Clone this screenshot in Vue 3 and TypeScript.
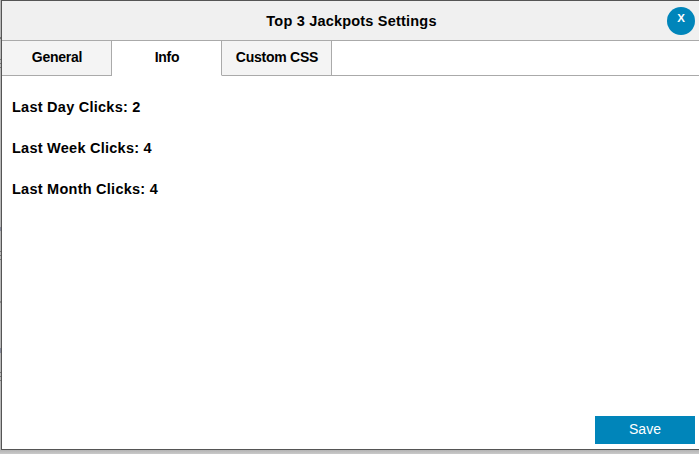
<script setup lang="ts">
import { ref } from 'vue'

const tabs: string[] = ['General', 'Info', 'Custom CSS']
const active = ref('Info')
const stats: { label: string; value: number }[] = [
  { label: 'Last Day Clicks', value: 2 },
  { label: 'Last Week Clicks', value: 4 },
  { label: 'Last Month Clicks', value: 4 },
]
</script>

<template>
  <div class="backdrop">
    <section class="dialog">
      <header class="title-bar">
        <h1>Top 3 Jackpots Settings</h1>
        <button class="close" type="button">X</button>
      </header>
      <nav class="tabs">
        <button
          v-for="tab in tabs"
          :key="tab"
          type="button"
          class="tab"
          :class="{ active: tab === active }"
          @click="active = tab"
        >{{ tab }}</button>
        <div class="rest"></div>
      </nav>
      <main class="content">
        <p v-for="s in stats" :key="s.label">{{ s.label }}: {{ s.value }}</p>
      </main>
      <footer class="actions">
        <button class="save" type="button">Save</button>
      </footer>
    </section>
  </div>
</template>

<style>
body {
  margin: 0;
  overflow: hidden;
}
</style>

<style scoped>
.backdrop {
  box-sizing: border-box;
  width: 699px;
  height: 454px;
  padding: 0 0 4px 1px;
  /* Dimmed page behind the dialog, with the edges of its rows at the left */
  background:
    linear-gradient(#777, #777) 0 37px / 1px 2px no-repeat,
    linear-gradient(#777, #777) 0 59px / 1px 1px no-repeat,
    linear-gradient(#777, #777) 0 63px / 1px 1px no-repeat,
    linear-gradient(#777, #777) 0 67px / 1px 1px no-repeat,
    linear-gradient(#85899a, #85899a) 0 227px / 1px 4px no-repeat,
    linear-gradient(#777, #777) 0 251px / 1px 1px no-repeat,
    linear-gradient(#777, #777) 0 255px / 1px 1px no-repeat,
    linear-gradient(#777, #777) 0 259px / 1px 1px no-repeat,
    linear-gradient(#888, #888) 0 301px / 1px 2px no-repeat,
    linear-gradient(#85899a, #85899a) 0 348px / 1px 5px no-repeat,
    linear-gradient(#777, #777) 0 372px / 1px 1px no-repeat,
    linear-gradient(#777, #777) 0 376px / 1px 1px no-repeat,
    linear-gradient(#777, #777) 0 380px / 1px 1px no-repeat,
    linear-gradient(#b4b4b4, #cacaca) 0 450px / 100% 4px no-repeat,
    #b8b8b8;
  font-family: 'Liberation Sans', Arial, sans-serif;
  color: #000;
}
.dialog {
  box-sizing: border-box;
  height: 450px;
  display: flex;
  flex-direction: column;
  background: #fff;
  border: 1px solid #555;
  border-right: 0;
}
button {
  margin: 0;
  padding: 0;
  border: 0;
  font-family: inherit;
}
.title-bar {
  box-sizing: border-box;
  height: 40px;
  flex: none;
  display: grid;
  grid-template-columns: 32px 1fr 32px;
  align-items: center;
  background: #f0f0f0;
  border-bottom: 1px solid #aaa;
}
h1 {
  grid-column: 2;
  margin: 0;
  padding-left: 2px;
  text-align: center;
  font-size: 14.5px;
  line-height: 20px;
  letter-spacing: 0.2px;
}
.close {
  width: 28px;
  height: 28px;
  border-radius: 50%;
  background: #0085ba;
  color: #fff;
  font-size: 11.5px;
  font-weight: bold;
  line-height: 22px;
  padding-bottom: 6px;
}
.tabs {
  height: 35px;
  flex: none;
  display: flex;
}
.tab {
  box-sizing: border-box;
  width: 110px;
  background: #f4f4f4;
  border-right: 1px solid #aaa;
  border-bottom: 1px solid #aaa;
  font-size: 14px;
  font-weight: bold;
  letter-spacing: -0.25px;
  color: #000;
  padding: 0 0 2px 1px;
}
.tab.active {
  background: #fff;
  border-bottom-color: #fff;
}
.rest {
  flex: 1;
  border-bottom: 1px solid #aaa;
}
.content {
  flex: 1;
  padding: 21px 10px 0;
}
.content p {
  margin: 0 0 21px;
  font-size: 14.5px;
  font-weight: bold;
  line-height: 20px;
  letter-spacing: 0.25px;
}
.actions {
  display: flex;
  justify-content: flex-end;
  padding: 0 4px 5px;
}
.save {
  width: 100px;
  height: 28px;
  padding-bottom: 2px;
  background: #0085ba;
  color: #fff;
  font-size: 14px;
}
</style>
